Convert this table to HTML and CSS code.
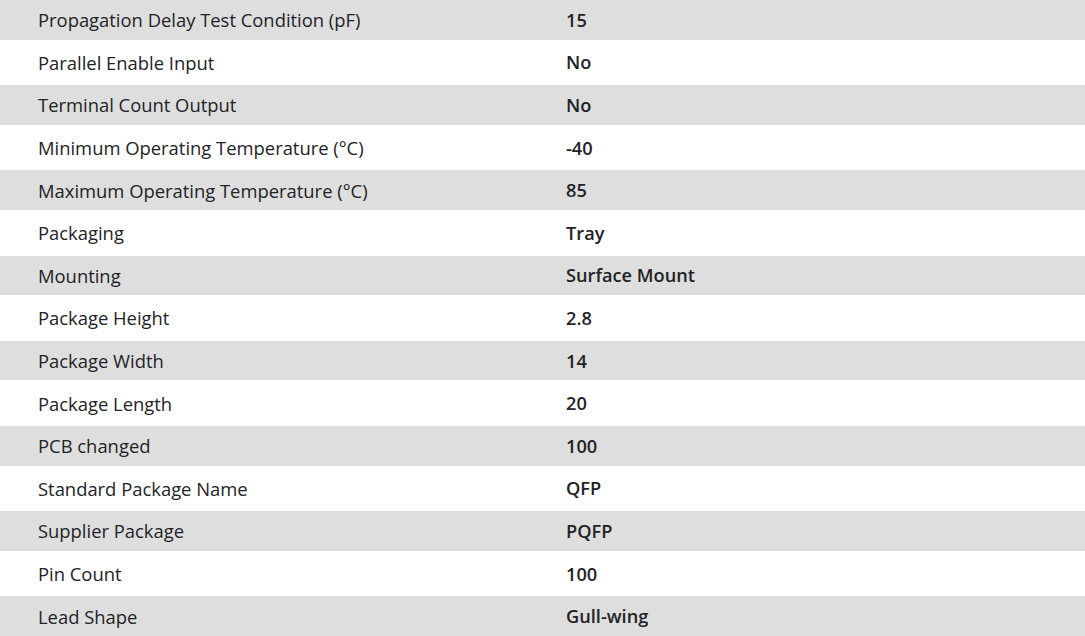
FILE: index.html
```html
<!DOCTYPE html>
<html>
<head>
<meta charset="utf-8">
<link rel="stylesheet" href="styles.css">
</head>
<body>
<div class="specs">
  <div class="row odd"><div class="label">Propagation Delay Test Condition (pF)</div><div class="value">15</div></div>
  <div class="row even"><div class="label">Parallel Enable Input</div><div class="value">No</div></div>
  <div class="row odd"><div class="label">Terminal Count Output</div><div class="value">No</div></div>
  <div class="row even"><div class="label">Minimum Operating Temperature (°C)</div><div class="value">-40</div></div>
  <div class="row odd"><div class="label">Maximum Operating Temperature (°C)</div><div class="value">85</div></div>
  <div class="row even"><div class="label">Packaging</div><div class="value">Tray</div></div>
  <div class="row odd"><div class="label">Mounting</div><div class="value">Surface Mount</div></div>
  <div class="row even"><div class="label">Package Height</div><div class="value">2.8</div></div>
  <div class="row odd"><div class="label">Package Width</div><div class="value">14</div></div>
  <div class="row even"><div class="label">Package Length</div><div class="value">20</div></div>
  <div class="row odd"><div class="label">PCB changed</div><div class="value">100</div></div>
  <div class="row even"><div class="label">Standard Package Name</div><div class="value">QFP</div></div>
  <div class="row odd"><div class="label">Supplier Package</div><div class="value">PQFP</div></div>
  <div class="row even"><div class="label">Pin Count</div><div class="value">100</div></div>
  <div class="row odd"><div class="label">Lead Shape</div><div class="value">Gull-wing</div></div>
</div>
</body>
</html>
```
FILE: styles.css
```css
html, body {
  margin: 0;
  padding: 0;
  background: #ffffff;
}
body {
  font-family: "Open Sans", "Noto Sans", sans-serif;
  color: #222326;
  overflow: hidden;
}
.specs {
  display: flex;
  flex-direction: column;
}
.row {
  display: grid;
  grid-template-columns: 528px 1fr;
  align-items: center;
  padding-left: 38px;
}
.row.odd {
  background: #dedede;
  height: 39.6px;
}
.row.even {
  background: #ffffff;
  height: 45.6px;
}
.label {
  font-size: 18.4px;
  font-weight: 400;
}
.value {
  font-size: 18.2px;
  font-weight: 600;
}
```
